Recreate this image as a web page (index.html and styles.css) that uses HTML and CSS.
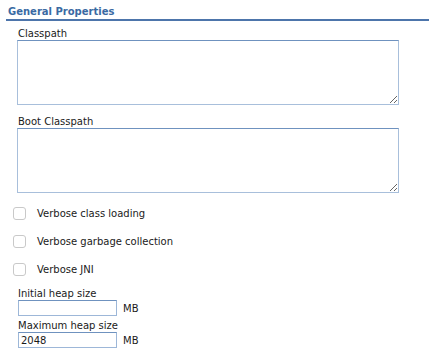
FILE: index.html
```html
<!DOCTYPE html>
<html>
<head>
	<meta charset="utf-8">
	<title>General Properties</title>
	<link rel="stylesheet" href="styles.css">
</head>
<body>
	<div class="section-title">General Properties</div>
	<div class="fields">
		<label class="field-label" for="classpath">Classpath</label>
		<textarea id="classpath" class="area"></textarea>

		<label class="field-label boot" for="bootcp">Boot Classpath</label>
		<textarea id="bootcp" class="area"></textarea>
	</div>
	<div class="checks">
		<label class="check"><input type="checkbox"> Verbose class loading</label>
		<label class="check"><input type="checkbox"> Verbose garbage collection</label>
		<label class="check"><input type="checkbox"> Verbose JNI</label>
	</div>
	<div class="fields heap">
		<label class="field-label" for="initheap">Initial heap size</label>
		<div class="size-row">
			<input type="text" id="initheap" class="size">
			<span class="unit">MB</span>
		</div>
		<label class="field-label max" for="maxheap">Maximum heap size</label>
		<div class="size-row">
			<input type="text" id="maxheap" class="size" value="2048">
			<span class="unit">MB</span>
		</div>
	</div>
</body>
</html>
```
FILE: styles.css
```css
body {
	margin: 0;
	background: #fff;
	color: #1a1a1a;
	font-family: "DejaVu Sans", Verdana, sans-serif;
	font-size: 10px;
}
.section-title {
	margin: 0 0 0 6px;
	padding: 5px 0 1px 2px;
	line-height: 13px;
	font-size: 10px;
	font-weight: bold;
	color: #3a6aa3;
	border-bottom: 2px solid #4d75ab;
}
.fields {
	padding-left: 17px;
	display: flex;
	flex-direction: column;
	align-items: flex-start;
}
.field-label {
	display: block;
	padding-left: 1px;
	margin-top: 7px;
	line-height: 12px;
}
.field-label.boot {
	margin-top: 11px;
}
.area {
	display: block;
	box-sizing: border-box;
	width: 382px;
	height: 65px;
	margin: 0;
	border: 1px solid #a8bfdb;
	border-top-color: #6f92bf;
	background: #fff;
	font-family: inherit;
	font-size: 10px;
}
.checks {
	padding: 13px 0 0 13px;
	display: flex;
	flex-direction: column;
	gap: 13px;
}
.check {
	display: flex;
	align-items: center;
	gap: 11px;
	height: 15px;
}
.check input {
	appearance: none;
	-webkit-appearance: none;
	margin: 0;
	width: 13px;
	height: 13px;
	border: 1px solid #c9c9c9;
	border-radius: 3px;
	background: #fff;
}
.heap .field-label {
	margin-top: 11px;
}
.heap .field-label.max {
	margin-top: 4px;
}
.size-row {
	display: flex;
	align-items: center;
}
.size {
	box-sizing: border-box;
	width: 99px;
	height: 16px;
	margin: 0 0 0 1px;
	padding: 0 2px;
	border: 1px solid #9db7d8;
	border-top-color: #6f92bf;
	font-family: inherit;
	font-size: 10px;
	color: #1a1a1a;
}
.unit {
	margin-left: 6px;
	padding-top: 1px;
	line-height: 13px;
}
```
